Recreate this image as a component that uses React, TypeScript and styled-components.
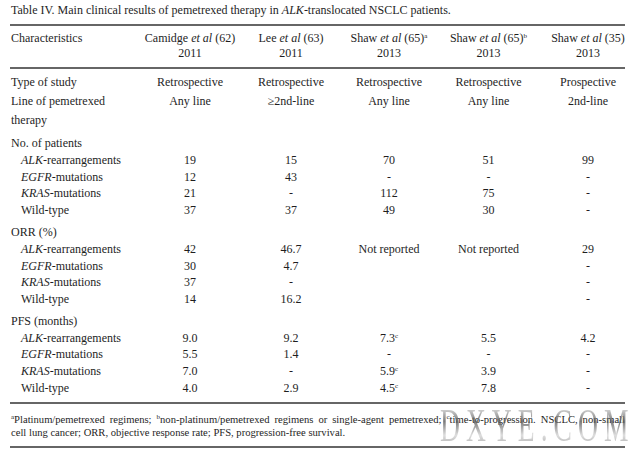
import React from "react";
import styled, { createGlobalStyle } from "styled-components";

const Global = createGlobalStyle`
  html, body { margin: 0; padding: 0; background: #fff; }
  body { font-family: "Liberation Serif", "Times New Roman", serif; color: #1e1e1e; }
`;

const Page = styled.div`
  width: 615px;
  padding: 3px 15px 0 10px;
  font-size: 12px;
`;

const Title = styled.div`
  font-size: 12px;
  line-height: 15px;
  padding-left: 1px;
  margin-bottom: 6px;
`;

const Table = styled.div`
  border-top: 2px solid #666;
  border-bottom: 2px solid #666;
`;

const cols = "130px 100px 102px 94px 105px 84px";

const HeaderRow = styled.div`
  display: grid;
  grid-template-columns: ${cols};
  padding: 5px 0 6px;
  border-bottom: 2px solid #666;
  line-height: 15px;
`;

const Cell = styled.div<{ $left?: boolean; $last?: boolean; $indent?: boolean }>`
  text-align: ${(p) => (p.$left ? "left" : "center")};
  padding-left: ${(p) => (p.$last ? "10px" : p.$indent ? "11px" : p.$left ? "1px" : "0")};
  white-space: nowrap;
`;

const Body = styled.div`
  padding: 4px 0 6px;
`;

const Row = styled.div<{ $lh: number; $gap?: number }>`
  display: grid;
  grid-template-columns: ${cols};
  line-height: ${(p) => p.$lh}px;
  margin-top: ${(p) => p.$gap ?? 0}px;
`;

const Sup = styled.sup`
  font-size: 7px;
  line-height: 0;
  vertical-align: 4px;
`;

const Footer = styled.div`
  position: relative;
  border-top: 2px solid #666;
  padding: 9px 0 7px 1px;
  font-size: 10.6px;
  line-height: 13px;
  overflow: visible;
`;

const FootLine = styled.div<{ $justify?: boolean }>`
  text-align: ${(p) => (p.$justify ? "justify" : "left")};
  text-align-last: ${(p) => (p.$justify ? "justify" : "auto")};
  white-space: nowrap;
`;

const Watermark = styled.div`
  position: absolute;
  left: 430px;
  top: -1px;
  font-size: 46px;
  line-height: 46px;
  letter-spacing: 10px;
  transform: scaleX(0.6);
  transform-origin: left top;
  white-space: nowrap;
  background: linear-gradient(180deg, rgba(255,255,255,0.7) 0%, rgba(90,90,90,0.8) 40%, rgba(200,200,200,0.6) 70%, rgba(120,120,120,0.7) 100%);
  -webkit-background-clip: text;
  background-clip: text;
  -webkit-text-fill-color: transparent;
  pointer-events: none;
`;

type V = React.ReactNode;

const groups: { title: string; rows: { label: V; vals: V[] }[] }[] = [
  {
    title: "No. of patients",
    rows: [
      { label: <><i>ALK</i>-rearrangements</>, vals: ["19", "15", "70", "51", "99"] },
      { label: <><i>EGFR</i>-mutations</>, vals: ["12", "43", "-", "-", "-"] },
      { label: <><i>KRAS</i>-mutations</>, vals: ["21", "-", "112", "75", "-"] },
      { label: "Wild-type", vals: ["37", "37", "49", "30", "-"] },
    ],
  },
  {
    title: "ORR (%)",
    rows: [
      { label: <><i>ALK</i>-rearrangements</>, vals: ["42", "46.7", "Not reported", "Not reported", "29"] },
      { label: <><i>EGFR</i>-mutations</>, vals: ["30", "4.7", "", "", "-"] },
      { label: <><i>KRAS</i>-mutations</>, vals: ["37", "-", "", "", "-"] },
      { label: "Wild-type", vals: ["14", "16.2", "", "", "-"] },
    ],
  },
  {
    title: "PFS (months)",
    rows: [
      { label: <><i>ALK</i>-rearrangements</>, vals: ["9.0", "9.2", <>7.3<Sup>c</Sup></>, "5.5", "4.2"] },
      { label: <><i>EGFR</i>-mutations</>, vals: ["5.5", "1.4", "-", "-", "-"] },
      { label: <><i>KRAS</i>-mutations</>, vals: ["7.0", "-", <>5.9<Sup>c</Sup></>, "3.9", "-"] },
      { label: "Wild-type", vals: ["4.0", "2.9", <>4.5<Sup>c</Sup></>, "7.8", "-"] },
    ],
  },
];

const Vals = ({ vals }: { vals: V[] }) => (
  <>
    {vals.map((v, i) => (
      <Cell key={i} $last={i === 4}>{v}</Cell>
    ))}
  </>
);

export default function App() {
  return (
    <Page>
      <Global />
      <Title>
        Table IV. Main clinical results of pemetrexed therapy in <i>ALK</i>-translocated NSCLC patients.
      </Title>
      <Table>
        <HeaderRow>
          <Cell $left>Characteristics<br />&nbsp;</Cell>
          <Cell>Camidge <i>et al</i> (62)<br />2011</Cell>
          <Cell>Lee <i>et al</i> (63)<br />2011</Cell>
          <Cell>Shaw <i>et al</i> (65)<Sup>a</Sup><br />2013</Cell>
          <Cell>Shaw <i>et al</i> (65)<Sup>b</Sup><br />2013</Cell>
          <Cell $last>Shaw <i>et al</i> (35)<br />2013</Cell>
        </HeaderRow>
        <Body>
          <Row $lh={19}>
            <Cell $left>Type of study</Cell>
            <Vals vals={["Retrospective", "Retrospective", "Retrospective", "Retrospective", "Prospective"]} />
          </Row>
          <Row $lh={19}>
            <Cell $left>Line of pemetrexed<br />therapy</Cell>
            <Vals vals={["Any line", "≥2nd-line", "Any line", "Any line", "2nd-line"]} />
          </Row>
          {groups.map((g) => (
            <React.Fragment key={g.title}>
              <Row $lh={17} $gap={5}>
                <Cell $left>{g.title}</Cell>
              </Row>
              {g.rows.map((r, i) => (
                <Row key={i} $lh={16.7}>
                  <Cell $left $indent>{r.label}</Cell>
                  <Vals vals={r.vals} />
                </Row>
              ))}
            </React.Fragment>
          ))}
        </Body>
        <Footer>
          <FootLine $justify>
            <Sup>a</Sup>Platinum/pemetrexed regimens; <Sup>b</Sup>non-platinum/pemetrexed regimens or single-agent pemetrexed; <Sup>c</Sup>time-to-progression. NSCLC, non-small
          </FootLine>
          <FootLine>cell lung cancer; ORR, objective response rate; PFS, progression-free survival.</FootLine>
          <Watermark aria-hidden="true">DXYE.COM</Watermark>
        </Footer>
      </Table>
    </Page>
  );
}
